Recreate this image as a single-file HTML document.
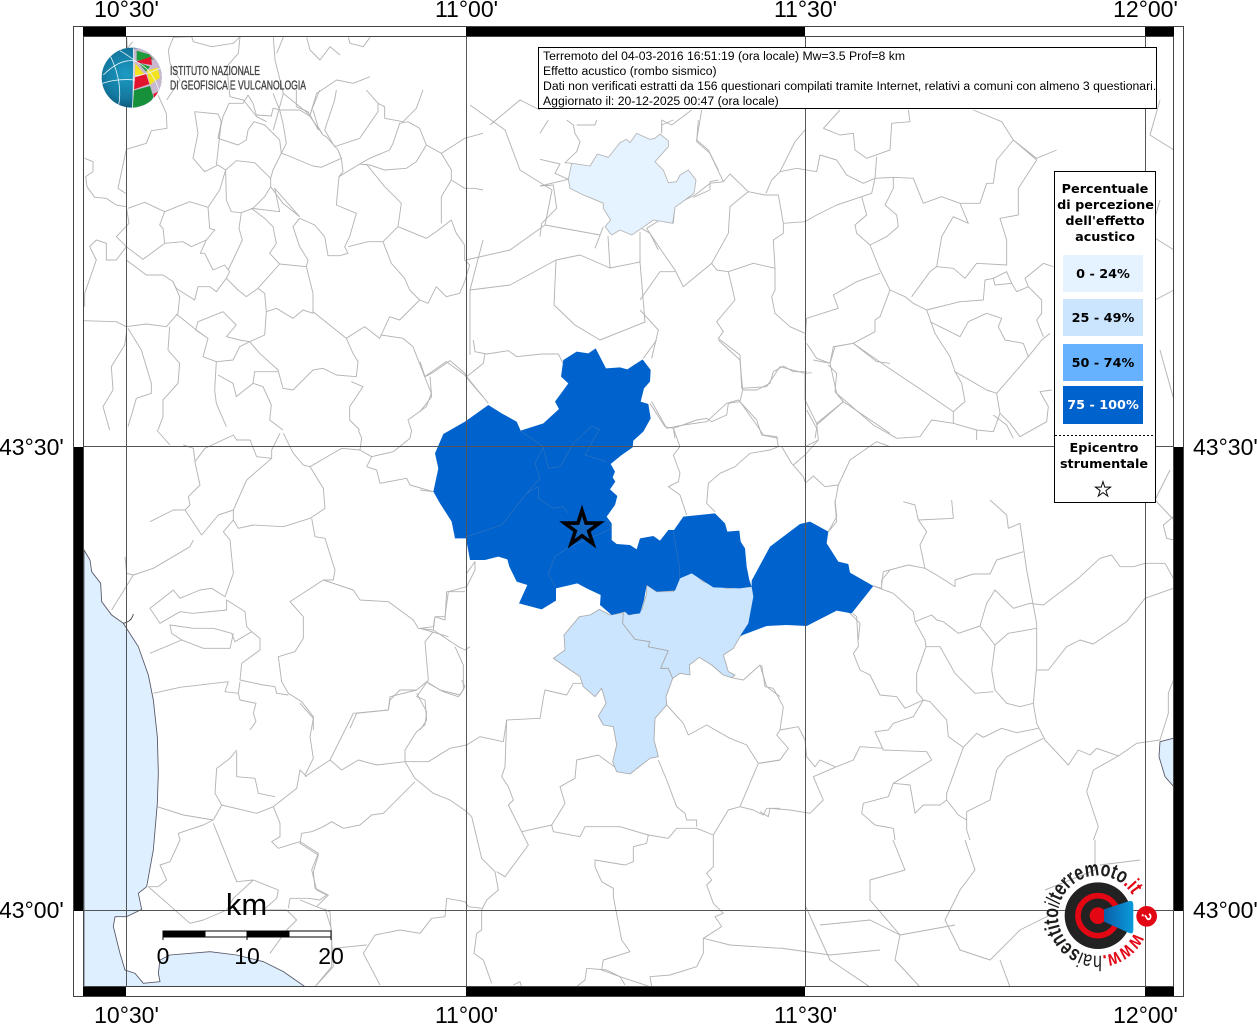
<!DOCTYPE html>
<html><head><meta charset="utf-8"><title>Effetto acustico</title>
<style>
html,body{margin:0;padding:0;background:#fff;width:1257px;height:1024px;overflow:hidden}
svg{display:block;position:absolute;left:0;top:0}
.ax{font:23px "Liberation Sans",sans-serif;fill:#000}
.info{font:12.23px "Liberation Sans",sans-serif;fill:#000}
.lg{font:bold 12.8px "DejaVu Sans",sans-serif;fill:#000;text-anchor:middle}
.ln{fill:none;stroke:#b4b4b4;stroke-width:2.8;stroke-linejoin:round}
.ing{font-family:"Liberation Sans Narrow","Liberation Sans",sans-serif;font-size:13px;fill:#444;stroke:#444;stroke-width:.35}
</style></head><body>
<svg width="1257" height="1024" viewBox="0 0 1257 1024" xmlns="http://www.w3.org/2000/svg">
<defs>
<clipPath id="mapc"><rect x="83" y="36" width="1091" height="951"/></clipPath>
<clipPath id="glb"><circle cx="185" cy="233" r="90"/></clipPath>
<radialGradient id="gb" cx="40%" cy="45%" r="65%"><stop offset="0" stop-color="#1b9cc4"/><stop offset=".6" stop-color="#14789f"/><stop offset="1" stop-color="#0b4a68"/></radialGradient>
<linearGradient id="cone" x1="0" y1="0" x2="1" y2="0"><stop offset="0" stop-color="#0a5ea8"/><stop offset="1" stop-color="#0a9bdc"/></linearGradient>
<path id="circ" d="M312.8,247.7 A120,120 0 1 1 307.9,137"/>
</defs>
<rect width="1257" height="1024" fill="#fff"/>
<g clip-path="url(#mapc)">
<!-- sea -->
<g transform="translate(70 540) scale(.33333)">
<path d="M42,30 L60,60 L65,95 L92,130 L95,185 L125,225 L160,250 L205,320 L235,405 L250,480 L262,590 L265,700 L262,790 L250,930 L230,1040 L205,1060 L215,1108 L170,1130 L135,1130 L130,1160 L150,1240 L165,1290 L195,1300 L220,1330 L270,1325 L265,1300 L270,1260 L300,1245 L420,1235 L500,1245 L580,1265 L640,1295 L705,1340 L42,1340 Z" fill="#deefff" stroke="#556" stroke-width="2.6"/>
<path d="M160,250 Q185,245 190,222" fill="none" stroke="#444" stroke-width="2.6"/>
</g>
<g transform="translate(760 500) scale(.33333)"><path d="M1200,725 L1250,712 L1250,870 L1215,830 L1197,770 Z" fill="#deefff" stroke="#556" stroke-width="2.6"/></g>
<!-- borders -->
<g transform="translate(83 90) scale(.33333)" class="ln">
<path d="M225,15 L250,70 L252,115 L205,122 L190,160 L130,178 L105,295 L128,310"/>
<path d="M5,205 L30,215 L30,245 L8,260 L12,290 L35,322 L70,325 L100,345 L130,350 L138,400 L100,440 L130,470 L180,508 L245,460 L240,415 L230,405 L245,365 L185,337 L135,355"/>
<path d="M245,365 L320,335 L375,352 L410,300 L428,240 L405,225 L365,245 L330,205 L345,130 L335,65 L405,72 L415,95 L400,225"/>
<path d="M415,95 L405,145 L465,165 L490,150 L495,120 L513,95 L545,105 L590,150 L595,190 L570,240 L563,265 L515,218 L460,212 L428,240 L430,330 L445,365 L475,368 L510,355 L545,320 L563,290 L563,265"/>
<path d="M405,145 L420,80 L438,40 L480,40 L495,15 L510,40 L520,75 L565,78 L570,55 L595,60 L650,60 L680,78 L720,135 L730,140 L765,180 L775,205 L715,232 L690,228 L610,195 L595,190 L610,160 L600,100 L590,60 L570,10"/>
<path d="M640,0 L640,50 L675,65 L680,78 L690,50 L710,0 M690,60 L705,110 L720,135 M725,120 L755,30 L760,0"/>
<path d="M725,120 L755,170 L830,145 L885,65 L885,40 L850,0 M885,40 L905,50 L905,85 L960,95 L1000,55 L1020,0"/>
<path d="M765,180 L775,205 L780,245 L768,260 L760,345 L820,370 L800,440 L785,470 L795,490 L770,497 L735,497 L725,440 L695,405 L650,385 L630,410 L650,470 L675,510 L670,530 L590,522 L560,490 L580,460 L570,410 L545,385 L505,355 L590,365 L575,295 L650,380"/>
<path d="M563,290 L600,340 L650,380"/>
<path d="M768,260 L830,222 L860,225 L905,240 L970,235 L1000,215 L1030,165 L1010,115 L975,95 L950,100 L930,160 L920,180 L860,205 L830,222"/>
<path d="M850,222 L905,290 L955,340 L945,410 L1030,445 L1060,425 L1105,390 L1120,430 L1145,465 L1145,510 L1160,525 L1145,575 L1130,610 L1090,620 L1060,590 L1035,640 L1010,630 L980,600 L965,565 L925,520 L900,455 L855,455 L795,470"/>
<path d="M945,410 L900,455"/>
<path d="M1030,165 L1075,190 L1105,240 L1105,270 L1075,320 L1075,400 M1105,270 L1145,295 L1175,295 L1200,300"/>
<path d="M1075,190 L1145,145 L1200,130"/>
<path d="M670,530 L690,610 L690,670 L660,660 L630,685 L580,655 L550,665 L545,610 L525,595 L490,620 L465,600 L430,565 L440,545 L425,525 L390,540 L365,490 L352,490 L370,450 L325,470 L300,455 L245,460"/>
<path d="M375,352 L380,415 L395,420 L370,450 M475,368 L468,415 L478,450 L450,510 L435,540 M590,522 L525,595 M430,565 L400,605 L380,590 L345,590 L335,630 L280,595 L270,575 L240,555 L190,555 L130,510"/>
<path d="M270,575 L290,620 L285,670 L250,710 L190,702 L130,710 L100,695 L0,692"/>
<path d="M280,672 L340,720 L375,745 L360,800 L400,815 L450,810 L470,770 L500,755 L545,735 L550,665 M375,745 L338,720 L345,695 L420,665 L460,705 L430,740 L470,750 L500,755 L530,790 L585,840 L600,895 L630,900 L690,840 L720,835 L760,855 L820,860 L825,815 L810,790 L790,745 L690,665"/>
<path d="M790,745 L845,710 L890,745 L920,680 L950,690 L1010,630"/>
<path d="M895,735 L960,745 L990,770 L1025,860 L1045,910 L1030,950 L975,990 L985,1020"/>
<path d="M1025,860 L1090,815 L1145,855 L1165,880 L1200,920"/>
<path d="M400,815 L395,900 L400,940 L430,1010"/>
<path d="M405,855 L450,880 L460,920 L510,880 L515,845 L585,845 M510,880 L540,890 L565,945 L560,990 L600,1020"/>
<path d="M805,875 L840,890 L800,950 L800,990 L830,1020"/>
<path d="M135,715 L175,780 L205,880 L205,910 L160,925 L150,960 L135,1010"/>
<path d="M260,710 L255,780 L290,820 L285,880 L240,930 L240,980 L225,1020"/>
<path d="M130,730 L125,765 L85,830 L90,900 L60,950 L80,1020"/>
<path d="M130,470 L100,510 L70,510 L70,460 L40,450 L20,470 L40,510 L5,610 L5,650"/>
</g>
<g transform="translate(640 100) scale(.33333)" class="ln">
<path d="M65,95 L65,60 L95,75 L155,30"/>
<path d="M185,30 L170,120 L205,150 L250,245 L270,222 L325,275 L375,285 L415,285 L430,370 L495,365"/>
<path d="M100,370 L60,360 L20,385 L70,460 L105,510 L130,560 L215,490 M100,370 L105,315 L165,285 L210,250 L250,245 M105,515 L60,515 L0,600"/>
<path d="M325,275 L270,320 L265,400 L215,490 L230,510 L265,515 L340,490 L405,505 L405,570 L395,590 L405,640 L450,680 L495,700"/>
<path d="M265,515 L285,600 L230,665 L250,695 L235,715 L300,765 L305,865 L380,860 L420,800 L495,820"/>
<path d="M405,505 L400,420 L430,400 L430,370"/>
<path d="M378,280 L395,240 L420,215 L465,125 L495,90"/>
<path d="M420,215 L470,205 L530,215 L540,165 L590,180 L620,225 L670,250 L705,235 L695,280 L665,290 L590,315 L530,345 L495,365"/>
<path d="M550,85 L600,30 M550,85 L600,105 L640,100 L645,150 L680,175 L750,150 L755,70 L810,65 L805,30"/>
<path d="M710,170 L705,235 L760,232 L820,235 L850,310 L905,290 L960,310 L1020,310 L1040,250 L1060,250 L1070,180 L1120,120 L1085,65 L1000,30"/>
<path d="M760,232 L760,265 L735,315 L770,345 L775,380 L740,410 L690,435 L650,400 L645,375 L680,345 L665,290"/>
<path d="M690,435 L720,510 L750,570 L795,590 L820,610 L860,630 L885,700 L930,770 L945,815 L1040,870 L1070,880 L1165,770 L1205,720 L1230,700"/>
<path d="M720,520 L650,545 L580,585 L595,625 L500,655 L495,720"/>
<path d="M750,570 L720,650 L705,660 L705,695 L640,730 L585,740 L570,790 L530,775 L500,730"/>
<path d="M815,590 L870,515 L890,500 L940,505 L975,535 L1010,490 L1100,495 L1100,420 L1080,355 L1135,345 M960,310 L985,370 L940,350 L905,410 L890,500"/>
<path d="M860,630 L960,605 L1030,600 L1035,540 L1060,535 L1065,555 L1115,550 L1100,515 L1060,535"/>
<path d="M1135,345 L1135,265 L1190,180 L1120,120 L1190,175 L1250,150"/>
<path d="M1115,550 L1130,575 L1165,560 L1205,600 L1205,640 L1190,660 L1210,710 M1165,560 L1155,535 L1210,490 L1240,500"/>
<path d="M870,665 L960,710 L985,665 L1040,640 L1085,655 L1075,680 L1095,720 L1150,730 L1165,770"/>
<path d="M640,730 L740,800 L800,840 L860,880 L940,935 L975,905 L965,850 L945,815"/>
<path d="M570,790 L590,880 L700,975 L770,1015 L840,1010 L875,960 L940,970 L940,935 M590,880 L610,905 L530,975 M940,970 L1010,990 L1060,995 L1080,940 L1070,880 M1060,945 L1100,975 L1120,1015 M1080,940 L1110,970 L1140,1010 L1220,965 L1225,920 L1200,875 L1235,870"/>
<path d="M1010,990 L1010,1020"/>
<path d="M0,630 L55,690 L35,775 M35,905 L80,985 L130,975 L200,965 L260,910 L295,900 L350,960 L365,1005 L415,1015 M100,985 L105,1015"/>
<path d="M495,820 L515,818 M495,850 L495,890 M500,930 L530,985 L525,1015"/>
</g>
<g transform="translate(150 430) scale(.33333)" class="ln">
<path d="M20,0 L60,45 M100,45 L130,55 L135,95 L140,120 L150,165 L115,200 L120,225 L105,240 L70,240 L0,275"/>
<path d="M105,240 L155,315 L205,255 L250,240 L250,270 L220,305 L240,330 L250,430 L225,500 L185,475 L150,480 L90,505 L70,480 L0,535 L30,580"/>
<path d="M135,95 L165,55 L250,15 L260,30 L300,30 L320,80 L365,85 L365,60 L390,10 M365,85 L290,150 L250,240"/>
<path d="M250,270 L265,295 L310,285 L400,290 L480,265 L525,235 L520,175 L480,110 L460,105 L430,70 L400,10"/>
<path d="M480,110 L540,75 L575,55 L630,60 L635,25 L625,0 M630,60 L665,80 L730,65 L780,25 L785,0 M650,110 L680,120 L690,160 L770,145 L780,165 L850,185 M650,110 L665,80"/>
<path d="M485,265 L495,320 L525,325 L555,420 L550,450 L520,450 L420,515 L460,560 L460,625 L435,665 L385,680 L395,755 L415,790 L455,815 L490,860 L490,900"/>
<path d="M520,450 L610,480 L630,510 L715,515 L790,570 L805,595 L850,600 L925,650 L945,660 L960,650 M850,600 L855,560 L885,570 L890,485 L945,485"/>
<path d="M850,605 L825,635 L835,750 L800,800 L825,810 L830,870 L810,900 M835,760 L880,785 L925,800 L940,780 L940,705 L915,650 M800,780 L750,780 L720,810 L715,840 L620,850 L600,895"/>
<path d="M30,580 L90,545 L130,550 L230,540 L230,510 L285,545 L290,590 L305,605 L255,635 L245,610 L190,595 L130,595 L60,585 L65,610 L95,630 L160,655 L240,655 L250,610"/>
<path d="M95,630 L0,670 M305,605 L330,625 L330,660 L275,700 L270,750 L340,765 L375,770 L380,790 L415,795"/>
<path d="M10,790 L90,772 L235,755 L225,785 L265,790 L270,810 L318,820 L310,850 L318,875 L300,900 M270,755 L265,790"/>
</g>
<g transform="translate(760 500) scale(.33333)" class="ln">
<path d="M225,0 L230,50 L205,95 M340,258 L400,280 L460,335 L465,365 L495,420 L498,440 L470,520 L470,575 L490,600 L435,625 L410,590 L360,585 L330,525 L300,510 L280,460 L295,440 L290,350 L278,340"/>
<path d="M430,5 L465,15 L475,60 L500,95 L480,135 L495,205 L530,225 L585,260 L585,240 L640,222 L690,222 L710,180 L790,155 M475,60 L580,55 L575,0 M365,255 L370,215 L445,195 L495,205"/>
<path d="M690,0 L740,45 L745,85 L780,70 L800,210 L830,370 L830,500 L820,610 L830,670 L855,720 L925,795 L955,750 L990,765 L1010,745 L1075,768 L1130,730 L1200,720 L1225,640 L1225,580 L1240,540"/>
<path d="M465,365 L515,345 L530,360 L550,365 L595,400 L660,378 L705,435 L695,510 L705,570 L740,610 L780,620 L820,610 M660,378 L680,310 L705,270 L730,295 L760,325 L810,310 L850,315 L955,235 L1020,175 L1055,165 L1080,200 L1120,200 L1155,190 L1215,190 L1240,235"/>
<path d="M705,435 L745,400 L830,385 M498,440 L540,440 L585,520 L645,580 L700,575"/>
<path d="M830,510 L865,510 L920,440 L960,420 L1000,432 L1100,365 L1155,295 L1240,265"/>
<path d="M490,600 L510,605 L560,660 L565,710 L610,742 L650,700 L670,712 L725,685 L770,698 L835,685 M610,742 L560,880 L560,900 L595,945 L620,960 M620,935 L690,900 L710,810 L740,770 L850,715 M620,935 L620,990 L630,1020"/>
<path d="M490,600 L460,650 L400,670 L385,690 L345,695 L370,750 L500,755 L515,780 L400,850 L450,855 L465,940 L490,915 L540,915 L560,900 M400,850 L385,890 L310,910 L305,940 L345,975 L400,985 L405,1020 M370,745 L300,740 L280,780 L230,800 L160,830 L190,900 L150,940 L90,930 L30,925 L25,950 L0,935"/>
<path d="M5,495 L15,560 L40,565 L70,620 L60,690 L115,680 L135,720 L140,770 L165,800 L180,780 L225,800 M60,690 L50,705 L85,745 L60,780 L0,790"/>
<path d="M1075,768 L1000,810 L980,875 L1015,980 L1000,1020"/>
<path d="M1240,50 L1210,75 L1220,115 L1240,120"/>
</g>
<g transform="translate(300 680) scale(.33333)" class="ln">
<path d="M0,70 L40,115 L30,170 L40,235 L15,285 M15,290 L90,240 L125,270 L175,240 L230,255 L315,245 L385,245 L450,205 L500,195 L540,170 L610,185 L620,120 L720,115 L730,55 L735,30 L800,45 L820,10 L845,10 M90,240 L160,100 L265,90 L270,50 L350,30 L380,5 M350,40 L380,95 L375,135 L350,155 L315,210 L315,245 L345,295 L400,340 L450,360 L500,395 L515,410 L545,535 L585,575 L595,630 L560,660 L545,690 L545,750 L530,760 L522,820 L550,840 L575,910"/>
<path d="M380,5 L420,30 L480,45 L495,20 L485,0"/>
<path d="M620,120 L615,260 L605,290 L625,320 L640,360 L625,375 L665,455 L755,435 L780,395 L795,370 L780,320 L825,295 L830,240 L895,225 L950,265"/>
<path d="M665,455 L685,495 L615,590 L590,575 M755,435 L760,455 L840,470 L855,440 L895,440 L960,440 L1045,465 L1105,475 L1130,445 L1190,445 L1240,465 L1285,390 L1320,380 L1375,250 L1340,195 L1290,175 L1220,135 L1165,165 L1150,130 L1100,75"/>
<path d="M1075,240 L1100,300 L1130,380 L1155,400 L1160,420 L1190,420 L1190,440"/>
<path d="M1045,465 L1040,490 L1000,500 L1000,545 L975,555 L885,540 L885,560 L905,605 L940,625 L940,650 L965,780 L990,815 L910,840 L905,870 L960,890 L1050,920 M1240,465 L1240,560 L1220,580 L1235,600 L1220,615 L1240,670 L1270,700 L1245,710 L1265,740 L1210,775 L1210,820 L1190,860 L1110,885 L1050,890 L1055,920"/>
<path d="M1320,380 L1360,390 L1390,405 L1400,385 L1440,385 M1375,250 L1440,240"/>
<path d="M345,305 L250,400 L215,405 L180,435 L130,445 L95,425 L70,440 L35,455 L5,460 L0,490 L55,525 L40,575 L45,625 L85,645 L50,680 L90,695 L95,780 L100,860 L50,915 M440,655 L495,665 L505,680 L545,685 M440,655 L435,710 L395,715 L360,760 L300,750 L225,765 L190,820 L240,915 M100,805 L200,795 M1210,775 L1290,795 L1440,805"/>
<path d="M0,660 L50,680 M860,865 L855,900 L830,920 M860,865 L920,870 L960,890 L975,915 M640,915 L660,905 L665,920"/>
</g>
<g transform="translate(70 540) scale(.33333)" class="ln">
<path d="M165,50 L170,100 L190,105 L250,85 L360,20 L370,0 M190,105 L150,170 L125,210"/>
<path d="M262,800 L340,825 L430,840 L455,795 L435,760 L440,685 L480,655 L500,630 M430,840 L400,855 L325,880 L330,900 L300,965 L270,975 L290,1020 L265,1040 M265,1040 L235,1040 L360,1150 L400,1140 L470,1110 L490,1075 L550,1020 L625,1050 L620,1075 L580,1110 L650,1110 L680,1140 L650,1170 L600,1240 M430,850 L500,1025 L550,1020"/>
<path d="M610,800 L630,850 L630,890 L605,905 L625,925 L690,905 L745,940 L725,990 L740,1050 L770,1065 L750,1080 L715,1075 L660,1075 L655,1105 M765,1105 L785,1170 L785,1280 L735,1340 M455,795 L560,820 L610,800 L680,745 L690,690 L710,710 M615,770 L565,760 L555,715 L500,710 L500,635"/>
</g>
<g transform="translate(70 0) scale(.33333)" class="ln">
<path d="M170,110 L172,145 L188,125"/>
<path d="M295,150 L310,112 L365,110 L370,125 L425,140 L490,130 L510,110 L505,160 L470,200 L480,290 L520,300 L560,350 L590,365"/>
<path d="M610,112 L615,180 L640,280 L610,390 M640,112 L620,160 M710,112 L720,150 L750,180 L780,140 L810,165 M835,112 L840,130 L880,140 L900,112"/>
<path d="M295,150 L300,190 L330,240 L290,300 M640,280 L720,345 L745,390 M720,345 L740,280 L800,240 L850,250 L900,230"/>
</g>
<g transform="translate(540 120) scale(.33333)" class="ln">
<path d="M0,40 L25,0 M80,0 L100,15 L105,40 L120,65 L110,95 L75,128 L95,130 M0,118 L60,132 L45,160 L85,178 M0,198 L85,178 M0,198 L40,195 L50,265 L5,310 L0,350 M110,15 L165,15 L170,0 M365,40 L365,15 L400,0 M475,0 L470,65 L510,100 L535,150 M460,232 L510,210 L510,185 L535,180 M190,320 L165,385 M305,325 L330,340 L355,390"/>
</g>
<g fill="none" stroke="#b4b4b4" stroke-width=".95" stroke-linejoin="round">
<path d="M466,260 L510,250 L545,225 L552,190 L520,170 L505,130 L470,105 M545,225 L600,235 M470,290 L510,285 L556,260 L580,255 L610,268 L640,262 L640,232 M608,236 L610,268 M556,260 L554,305 L575,325 L600,340 L645,322 L640,262 M483,240 L470,290 L470,355 M490,125 L520,100 L540,110"/>
<path d="M893,840 L905,870 L870,880 L870,900 L900,935 L895,960 L920,987 M965,840 L975,870 L960,890 L945,920 L960,950 L990,960 L1020,930 L1050,915 M1095,840 L1095,870 L1045,890 M820,925 L870,920 L900,935 L955,925 M805,905 L830,960 L870,987 M1000,960 L1010,987 M1140,860 L1100,865 M780,948 L830,955 L880,950"/>
<path d="M1160,100 L1150,135 L1174,150 M1160,200 L1150,235 L1174,250 M1155,300 L1174,290 M1160,350 L1174,400 M1170,470 L1155,500 L1174,520"/>
</g>
<g transform="translate(420 340) scale(.33333)" class="ln">
<path d="M160,0 L165,35 L200,42 L265,32 L290,50 L365,42 L415,42 L432,75 M140,110 L190,70 L195,40 M0,65 L15,110 L35,100 L90,62 L135,100 L140,110 L205,190 M30,110 L35,170 L0,215"/>
<path d="M710,0 L670,55 M690,190 L735,260 L760,265 L830,240 L860,235 L875,245 L920,225 L925,190 L960,185 L968,150 L960,60 L895,0"/>
<path d="M968,150 L1010,150 L1050,130 L1060,95 L1090,78 L1120,95 L1160,95"/>
<path d="M960,185 L1010,255 L1030,285 L1070,290 L1075,320 L1050,330 L990,340 L945,380 L900,400 L865,430 L860,490 L885,515"/>
<path d="M760,265 L780,320 L760,345 L780,400 L775,425 L745,440 L780,465 L800,525"/>
<path d="M1085,320 L1115,370 L1150,410 L1155,425 M1120,375 L1155,345 L1195,300 L1190,250 L1270,185 L1245,155 L1250,100 L1225,75"/>
<path d="M1155,430 L1180,408 L1215,440 L1255,435 L1245,490 L1250,545 L1225,575"/>
<path d="M1155,100 L1155,180 L1190,250 M1270,185 L1410,280 M1155,320 L1195,300 M1290,360 L1370,305 L1410,320 M1255,435 L1290,360"/>
<path d="M1180,60 L1230,70 L1240,20 L1300,10 L1370,65 L1410,70"/>
<path d="M0,450 L40,455 M140,700 L165,665 L165,690 L140,740 L85,755 L75,830 L45,830 L40,860 L0,865 L85,890"/>
<path d="M1285,815 L1320,850 L1315,900 M1410,690 L1385,720 L1385,745 L1360,738"/>
</g>
<g transform="translate(540 570) scale(.33333)" class="ln">
<path d="M575,323 L610,330 L660,285 L680,350 L720,380"/>
</g>
<!-- pale -->
<g transform="translate(540 120) scale(.33333)">
<path d="M95,130 L150,138 L172,102 L205,112 L240,68 L260,58 L270,68 L290,40 L330,58 L345,55 L360,42 L385,62 L385,80 L345,125 L370,150 L385,188 L410,185 L420,165 L445,150 L468,180 L462,220 L435,240 L405,262 L398,310 L340,300 L305,325 L275,345 L240,330 L215,345 L195,320 L212,300 L190,265 L190,250 L155,235 L130,225 L90,205 L85,178 Z" fill="#e5f2ff" stroke="#b4b4b4" stroke-width="2.6" stroke-linejoin="round"/>
</g>
<!-- light -->
<g transform="translate(540 570) scale(.33333)" fill="#cce5ff" stroke="#aaa" stroke-width="2.6" stroke-linejoin="round">
<path d="M40,265 L75,240 L72,195 L118,140 L150,135 L178,118 L210,135 L250,128 L248,160 L285,208 L330,215 L325,230 L385,242 L362,295 L385,295 L398,325 L378,380 L380,405 L345,445 L342,510 L355,560 L330,565 L270,612 L230,605 L218,575 L230,525 L220,470 L190,465 L175,438 L198,400 L185,355 L165,380 L130,350 L120,320 Z"/>
<path d="M250,128 L262,122 L270,135 L305,120 L320,70 L320,45 L350,65 L400,65 L417,20 L455,5 L490,35 L560,55 L640,50 L648,80 L635,130 L620,185 L600,200 L580,235 L550,255 L565,305 L585,315 L575,323 L550,315 L515,285 L478,262 L448,285 L450,315 L420,310 L398,325 L385,295 L362,295 L385,242 L325,230 L330,215 L285,208 L248,160Z"/>
</g>
<!-- dark -->
<g transform="translate(420 340) scale(.33333)">
<path fill="#0062cc" d="M527,25 L545,60 L558,85 L600,82 L622,88 L668,58 L692,90 L690,125 L672,145 L662,185 L685,192 L692,235 L670,275 L640,302 L638,322 L605,345 L572,372 L585,395 L578,412 L586,425 L570,448 L592,468 L585,495 L560,530 L575,550 L575,600 L590,612 L630,615 L650,628 L660,595 L700,588 L720,602 L745,570 L762,570 L790,530 L885,520 L915,550 L922,575 L958,572 L962,605 L975,625 L980,680 L988,720 L995,740 L960,745 L880,742 L815,700 L780,715 L765,752 L710,755 L680,735 L672,780 L660,820 L625,825 L615,815 L575,825 L540,795 L542,765 L500,745 L472,730 L408,745 L408,782 L365,808 L297,790 L322,735 L290,725 L268,680 L262,658 L235,650 L195,660 L150,660 L138,595 L105,595 L95,545 L60,490 L40,455 L55,385 L45,340 L70,282 L135,245 L205,195 L245,220 L290,245 L302,272 L370,250 L417,207 L405,185 L445,130 L423,110 L430,60 L470,35 L505,40 Z"/>
<path fill="#0062cc" d="M995,722 L1050,620 L1140,552 L1170,545 L1225,575 L1220,610 L1255,665 L1285,672 L1290,698 L1360,738 L1295,820 L1250,812 L1160,858 L1100,855 L1040,858 L960,888 L985,850 L1000,770 L995,740Z"/>
<g fill="none" stroke="#3276bf" stroke-width="1.8" stroke-linejoin="round">
<path d="M300,272 L370,320 L345,370 L360,415 L320,460 L245,555 L140,590 M370,325 L385,385 L420,380 L460,310 L515,258 L538,268 L495,345 L560,365 M320,460 L355,440 L355,475 L400,505 L430,500 L445,520 M560,540 L575,565 L530,585 L440,625 L405,650 L385,700 L405,740 M760,575 L778,680 L778,720"/>
</g>
</g>
<!-- grid -->
<g stroke="#555" stroke-width="1" fill="none">
<path d="M126.5,36V987M466.5,36V987M805.5,36V987M1145.5,36V987M83,446.5H1174M83,910.5H1174"/>
</g>
<!-- epicentre star -->
<g transform="translate(582 528.8) scale(1.85)"><polygon points="0,-10 2.2,-3.1 9.5,-3.1 3.6,1.2 5.9,8.1 0,3.8 -5.9,8.1 -3.6,1.2 -9.5,-3.1 -2.2,-3.1" fill="#1266c2" stroke="#000" stroke-width="1.9" stroke-miterlimit="10"/></g>
</g>
<!-- frame -->
<g fill="#000">
<rect x="83" y="26" width="43" height="10"/><rect x="466" y="26" width="339" height="10"/><rect x="1145" y="26" width="29" height="10"/>
<rect x="83" y="987" width="43" height="10"/><rect x="466" y="987" width="339" height="10"/><rect x="1145" y="987" width="29" height="10"/>
<rect x="73" y="447" width="10" height="464"/><rect x="1174" y="447" width="10" height="464"/>
</g>
<g fill="none" stroke="#444" stroke-width="1">
<rect x="73.5" y="26.5" width="1110" height="970"/>
<rect x="83.5" y="36.5" width="1090" height="950"/>
</g>
<!-- axis labels -->
<g class="ax" text-anchor="middle">
<text x="126.5" y="17">10°30'</text><text x="466.5" y="17">11°00'</text><text x="805.5" y="17">11°30'</text><text x="1145.5" y="17">12°00'</text>
<text x="126.5" y="1023">10°30'</text><text x="466.5" y="1023">11°00'</text><text x="805.5" y="1023">11°30'</text><text x="1145.5" y="1023">12°00'</text>
</g>
<g class="ax">
<text x="-1" y="455">43°30'</text><text x="-1" y="918">43°00'</text>
<text x="1193" y="455">43°30'</text><text x="1193" y="918">43°00'</text>
</g>
<!-- scale bar -->
<text x="246.5" y="915" text-anchor="middle" style="font:31px 'Liberation Sans',sans-serif">km</text>
<rect x="163" y="931" width="168" height="6" fill="#fff" stroke="#000" stroke-width="1"/>
<rect x="163" y="931" width="42" height="6" fill="#000"/><rect x="247" y="931" width="42" height="6" fill="#000"/>
<path d="M163,931V940M205,931V937M247,931V940M289,931V937M331,931V940" stroke="#000" stroke-width="1" fill="none"/>
<g class="ax" text-anchor="middle"><text x="163" y="964">0</text><text x="247" y="964">10</text><text x="331" y="964">20</text></g>
<!-- info box -->
<rect x="538.5" y="47.5" width="618" height="61" fill="#fff" stroke="#000"/>
<g class="info">
<text x="543" y="60">Terremoto del 04-03-2016 16:51:19 (ora locale) Mw=3.5 Prof=8 km</text>
<text x="543" y="75">Effetto acustico (rombo sismico)</text>
<text x="543" y="90">Dati non verificati estratti da 156 questionari compilati tramite Internet, relativi a comuni con almeno 3 questionari.</text>
<text x="543" y="105">Aggiornato il: 20-12-2025 00:47 (ora locale)</text>
</g>
<!-- legend -->
<rect x="1054.5" y="171.5" width="101" height="331" fill="#fff" stroke="#000"/>
<text class="lg" x="1105" y="193">Percentuale</text>
<text class="lg" x="1105.5" y="209">di percezione</text>
<text class="lg" x="1105" y="225">dell'effetto</text>
<text class="lg" x="1105" y="241">acustico</text>
<rect x="1063" y="255" width="80" height="37" fill="#e5f2ff"/>
<rect x="1063" y="299" width="80" height="37" fill="#cce5ff"/>
<rect x="1063" y="344" width="80" height="37" fill="#66b2ff"/>
<rect x="1063" y="386" width="80" height="38" fill="#0062cc"/>
<text class="lg" x="1103" y="278">0 - 24%</text>
<text class="lg" x="1103" y="322">25 - 49%</text>
<text class="lg" x="1103" y="367">50 - 74%</text>
<text class="lg" x="1103" y="409" style="fill:#fff">75 - 100%</text>
<path d="M1055,435.5H1155" stroke="#000" stroke-width="1" stroke-dasharray="2 2" fill="none"/>
<text class="lg" x="1104" y="452">Epicentro</text>
<text class="lg" x="1104" y="468">strumentale</text>
<g transform="translate(1103 489.6) scale(.8)"><polygon points="0,-10 2.2,-3.1 9.5,-3.1 3.6,1.2 5.9,8.1 0,3.8 -5.9,8.1 -3.6,1.2 -9.5,-3.1 -2.2,-3.1" fill="#fff" stroke="#000" stroke-width="1.2" stroke-miterlimit="10"/></g>
<!-- INGV logo -->
<g transform="translate(70 0) scale(.33333)">
<circle cx="185" cy="233" r="90" fill="url(#gb)"/>
<g clip-path="url(#glb)">
<path d="M190,145 L280,145 L280,330 L187,325 Z" fill="#c9b8cf"/>
<path d="M200,152 L238,163 L250,178 L200,182 Z" fill="#1f9a3a"/>
<path d="M198,185 L243,170 L246,195 L200,188 Z" fill="#e3142d"/>
<path d="M196,190 L225,225 L195,228 Z" fill="#f2e21f"/>
<path d="M205,188 L240,200 L228,215 Z" fill="#1f9a3a"/>
<path d="M195,232 L228,222 L238,252 L192,268 Z" fill="#e3142d"/>
<path d="M230,212 L262,203 L270,232 L240,255 Z" fill="#f2e21f"/>
<path d="M190,272 L240,258 L250,290 L240,310 L187,325 Z" fill="#17903a"/>
<path d="M262,290 L252,292 L250,282 L265,275 Z" fill="#e3142d"/>
</g>
<g fill="none" stroke="#eaf6fa" stroke-width="2.4" clip-path="url(#glb)">
<path d="M190,145 Q195,235 187,325"/>
<path d="M100,225 Q150,175 195,183"/>
<path d="M97,250 Q140,235 195,240"/>
<path d="M122,170 Q160,250 145,320"/>
<path d="M150,152 Q180,170 198,185"/>
<path d="M195,183 Q255,210 270,285"/>
<path d="M195,228 Q225,225 270,205"/>
</g>
</g>
<g class="ing">
<text x="170" y="75" textLength="90" lengthAdjust="spacingAndGlyphs">ISTITUTO NAZIONALE</text>
<text x="170" y="89.5" textLength="136" lengthAdjust="spacingAndGlyphs">DI GEOFISICA E VULCANOLOGIA</text>
</g>
<!-- haisentito logo -->
<g transform="translate(1030 850) scale(.33333)">
<circle cx="204" cy="197" r="100" fill="#222"/>
<circle cx="204" cy="197" r="60" fill="none" stroke="#e30613" stroke-width="17"/>
<circle cx="204" cy="197" r="25" fill="#e30613"/>
<path d="M222,178 L298,153 Q310,150 310,165 L310,240 Q310,255 295,248 L222,215 Z" fill="url(#cone)"/>
<circle cx="350" cy="199" r="31" fill="#e30613"/>
<text x="350" y="214" text-anchor="middle" transform="rotate(100 350 199)" style="font:bold 42px 'Liberation Sans',sans-serif;fill:#fff">?</text>
<text style="font:bold 64px 'Liberation Sans',sans-serif;fill:#1d1d1b"><textPath href="#circ" textLength="636" lengthAdjust="spacingAndGlyphs"><tspan fill="#e30613">www.</tspan><tspan font-weight="normal">hai</tspan><tspan>sentito</tspan><tspan font-weight="normal" font-style="italic">il</tspan><tspan>terremoto</tspan><tspan fill="#e30613">.it</tspan></textPath></text>
</g>
</svg>
</body></html>
